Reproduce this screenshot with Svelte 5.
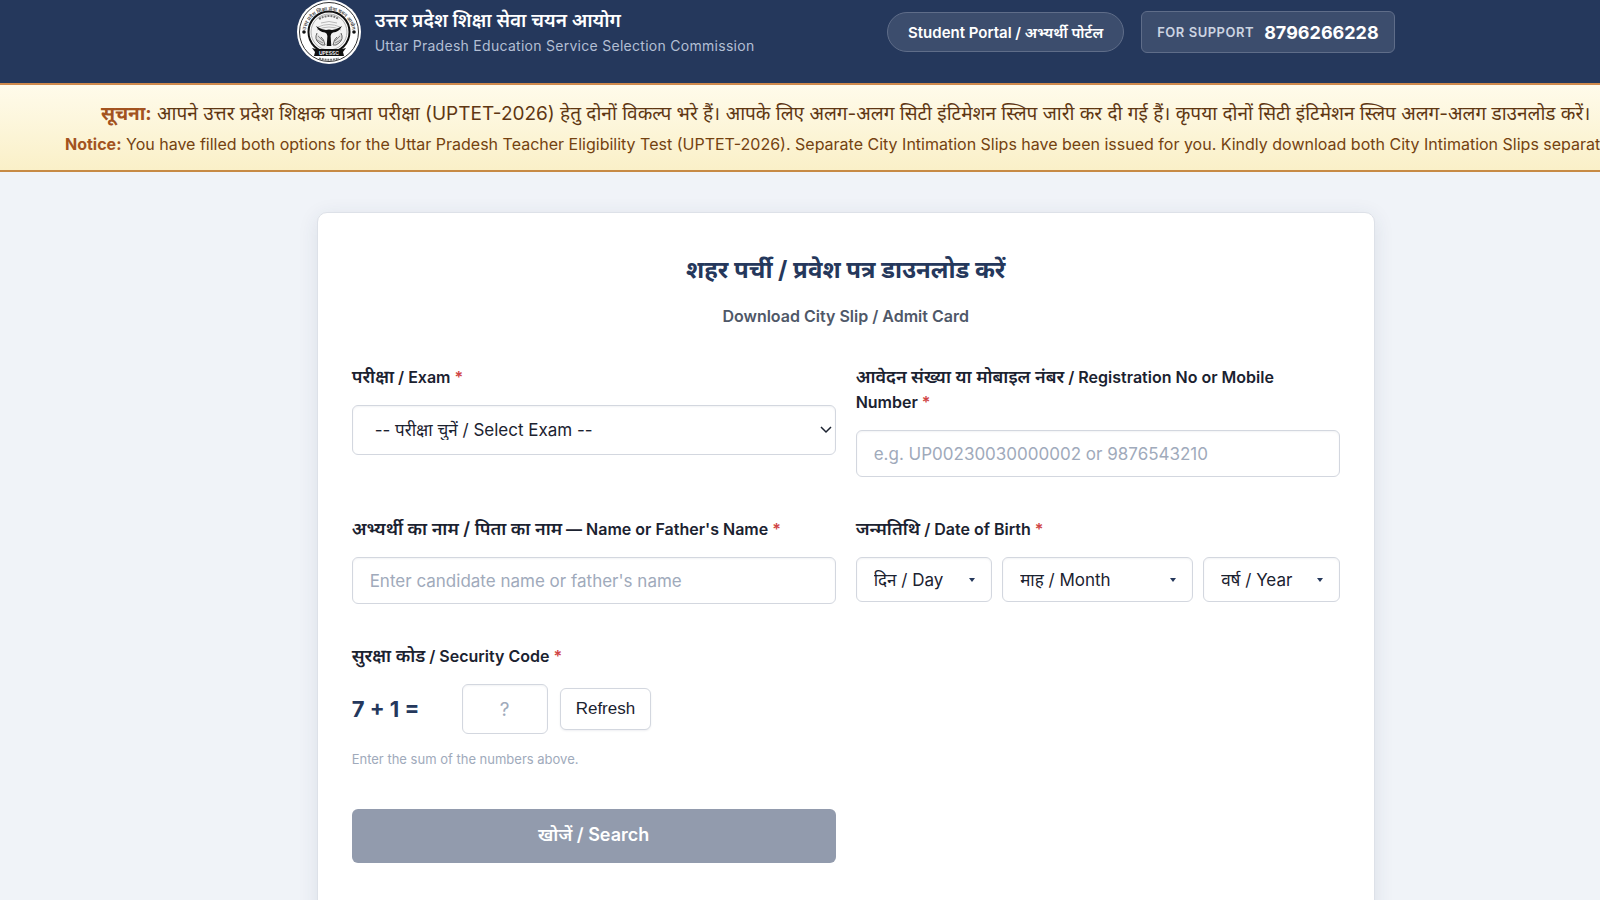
<script lang="ts">
  let exam = $state('')
  let registration = $state('')
  let candidate = $state('')
  let day = $state('')
  let month = $state('')
  let year = $state('')
  let answer = $state('')
  let first = $state(7)
  let second = $state(1)

  const days = Array.from({ length: 31 }, (_, i) => String(i + 1))
  const months = Array.from({ length: 12 }, (_, i) => String(i + 1))
  const years = Array.from({ length: 60 }, (_, i) => String(2010 - i))

  let ready = $derived(
    Boolean(exam && registration && candidate && day && month && year) &&
      Number(answer) === first + second
  )

  function refresh(): void {
    first = Math.ceil(Math.random() * 9)
    second = Math.ceil(Math.random() * 9)
    answer = ''
  }
</script>

<div class="page">
  <header>
    <div class="header-inner">
      <div class="brand">
        <svg class="logo" viewBox="0 0 64 64" aria-hidden="true">
          <defs>
            <path id="arc-top" d="M8.500 34a23.500 23.500 0 0 1 47 0" />
          </defs>
          <circle cx="32" cy="32" r="32" fill="#fff" />
          <circle cx="32" cy="32" r="29.500" fill="none" stroke="#333" stroke-width="1" />
          <circle cx="32" cy="32" r="20.500" fill="none" stroke="#111" stroke-width="2" />
          <circle cx="32" cy="32" r="18" fill="#f4f4f4" stroke="#999" stroke-width="0.800" />
          <text class="seal" font-size="5"><textPath href="#arc-top" startOffset="50%">उत्तर प्रदेश शिक्षा सेवा चयन आयोग</textPath></text>
          <circle cx="7" cy="32" r="1.800" fill="#111" />
          <circle cx="57" cy="32" r="1.800" fill="#111" />
          <path d="M22 19Q32 13 42 19" fill="none" stroke="#777" stroke-width="2" stroke-dasharray="2 1" />
          <path d="M21 27q11-5 22 0M20 30q12-6 24 0M24 23q8-3 16 0" fill="none" stroke="#aaa" stroke-width="0.800" />
          <path d="M19 26q5 3.500 10 4q3-1 6 0q5-.5 10-4q-3 6-9 6.600q-2.200.6-2.400 3.400l.7 10h-4.600l.7-10q-.2-2.800-2.400-3.400q-6-.6-9-6.600z" fill="#111" />
          <path d="M20 33q-3 6 2 10q3 3 6 2q-1-6-4-8m20-4q3 6-2 10q-3 3-6 2q1-6 4-8" fill="#ddd" stroke="#666" stroke-width="1" />
          <path d="M21 36l5 5m-6-1l6 3m17-7l-5 5m6-1l-6 3" stroke="#777" stroke-width="0.800" />
          <path d="M15 48l4 1h26l4-1-3 4 1 4H17l1-4z" fill="#111" />
          <text class="seal band" x="32" y="54.500" font-size="5">UPESSC</text>
          <path d="M22 58.500Q32 61 42 58.500" fill="none" stroke="#777" stroke-width="2" stroke-dasharray="2 0.800" />
        </svg>
        <div class="brand-text">
          <strong>उत्तर प्रदेश शिक्षा सेवा चयन आयोग</strong>
          <span>Uttar Pradesh Education Service Selection Commission</span>
        </div>
      </div>
      <div class="header-actions">
        <a class="portal" href="#portal">Student Portal / अभ्यर्थी पोर्टल</a>
        <a class="support" href="tel:8796266228">
          <span>FOR SUPPORT</span>
          <strong>8796266228</strong>
        </a>
      </div>
    </div>
  </header>

  <section class="notice">
    <p class="hindi"><b>सूचना:</b> आपने उत्तर प्रदेश शिक्षक पात्रता परीक्षा (UPTET-2026) हेतु दोनों विकल्प भरे हैं। आपके लिए अलग-अलग सिटी इंटिमेशन स्लिप जारी कर दी गई हैं। कृपया दोनों सिटी इंटिमेशन स्लिप अलग-अलग डाउनलोड करें।</p>
    <p><b>Notice:</b> You have filled both options for the Uttar Pradesh Teacher Eligibility Test (UPTET-2026). Separate City Intimation Slips have been issued for you. Kindly download both City Intimation Slips separately.</p>
  </section>

  <main>
    <h1>शहर पर्ची / प्रवेश पत्र डाउनलोड करें</h1>
    <p class="subtitle">Download City Slip / Admit Card</p>

    <form onsubmit={(e) => e.preventDefault()}>
      <div class="field">
        <label for="exam"><span lang="hi">परीक्षा</span> / Exam <i>*</i></label>
        <div class="select-wrap">
          <select id="exam" class="exam" bind:value={exam}>
            <option value="">-- परीक्षा चुनें / Select Exam --</option>
            <option value="uptet">UPTET-2026</option>
          </select>
          <svg class="chevron" viewBox="0 0 12 8" aria-hidden="true"><path d="M1 1l5 5 5-5" /></svg>
        </div>
      </div>

      <div class="field">
        <label for="registration"><span lang="hi">आवेदन संख्या या मोबाइल नंबर</span> / Registration No or Mobile Number <i>*</i></label>
        <input id="registration" placeholder="e.g. UP00230030000002 or 9876543210" bind:value={registration} />
      </div>

      <div class="field">
        <label for="candidate"><span lang="hi">अभ्यर्थी का नाम / पिता का नाम</span> — Name or Father's Name <i>*</i></label>
        <input id="candidate" placeholder="Enter candidate name or father's name" bind:value={candidate} />
      </div>

      <div class="field">
        <label for="day"><span lang="hi">जन्मतिथि</span> / Date of Birth <i>*</i></label>
        <div class="dob">
          <div class="select-wrap">
            <select id="day" bind:value={day}>
              <option value="">दिन / Day</option>
              {#each days as d}<option>{d}</option>{/each}
            </select>
            <svg class="caret" viewBox="0 0 6 4" aria-hidden="true"><path d="M0 0h6L3 4z" /></svg>
          </div>
          <div class="select-wrap">
            <select aria-label="माह / Month" bind:value={month}>
              <option value="">माह / Month</option>
              {#each months as m}<option>{m}</option>{/each}
            </select>
            <svg class="caret" viewBox="0 0 6 4" aria-hidden="true"><path d="M0 0h6L3 4z" /></svg>
          </div>
          <div class="select-wrap">
            <select aria-label="वर्ष / Year" bind:value={year}>
              <option value="">वर्ष / Year</option>
              {#each years as y}<option>{y}</option>{/each}
            </select>
            <svg class="caret" viewBox="0 0 6 4" aria-hidden="true"><path d="M0 0h6L3 4z" /></svg>
          </div>
        </div>
      </div>

      <div class="field first-column">
        <label for="answer"><span lang="hi">सुरक्षा कोड</span> / Security Code <i>*</i></label>
        <div class="captcha">
          <span class="sum">{first} + {second} =</span>
          <input id="answer" inputmode="numeric" placeholder="?" bind:value={answer} />
          <button type="button" class="refresh" onclick={refresh}>Refresh</button>
        </div>
        <p class="hint">Enter the sum of the numbers above.</p>
      </div>

      <button class="search first-column" disabled={!ready}>खोजें / Search</button>
    </form>
  </main>
</div>

<style>
  :global(body) {
    background: #f0f3f8;
    overflow-x: hidden;
  }

  .page {
    /* the one-line notice sets the page width on narrower windows */
    width: max-content;
    min-width: 100%;
    color: #1b2230;
    font-family: Inter, 'Noto Sans Devanagari', 'Noto Sans', sans-serif;
    font-size: 16px;
    line-height: 25px;
  }

  header {
    background: #25385c;
    padding-bottom: 19px;
  }

  .header-inner {
    display: flex;
    align-items: center;
    justify-content: space-between;
    max-width: 1098px;
    margin: 0 auto;
  }

  .brand {
    display: flex;
    align-items: center;
    gap: 14px;
  }

  .logo {
    width: 64px;
    height: 64px;
  }

  .seal {
    font-weight: 600;
    fill: #444;
    text-anchor: middle;
  }

  .band {
    fill: #fff;
  }

  .brand-text {
    display: flex;
    flex-direction: column;
    padding-top: 2px;
  }

  .brand-text strong {
    color: #fff;
    font-size: 19px;
    font-weight: 600;
  }

  .brand-text span {
    color: #b3bfd4;
    font-size: 14px;
    letter-spacing: 0.02em;
  }

  .header-actions {
    display: flex;
    align-items: center;
    gap: 17px;
  }

  .header-actions a {
    color: #fff;
    text-decoration: none;
    background: #3c4d6d;
    border: 1px solid #5f6d89;
    box-sizing: border-box;
  }

  .portal {
    display: flex;
    align-items: center;
    height: 40px;
    padding: 0 20px;
    border-radius: 20px;
    font-size: 15px;
    font-weight: 600;
  }

  .support {
    display: flex;
    align-items: center;
    gap: 10px;
    height: 42px;
    padding: 0 15px;
    border-radius: 6px;
  }

  .support span {
    color: #ccd4e2;
    font-size: 13px;
    font-weight: 600;
    letter-spacing: 0.04em;
  }

  .support strong {
    font-size: 18px;
    font-weight: 700;
  }

  .notice {
    padding: 15px 65px 13px;
    border-top: 2px solid #d08a4c;
    border-bottom: 2px solid #c78a45;
    background: linear-gradient(#fffbeb, #faf0c8);
    color: #744210;
    text-align: center;
    white-space: nowrap;
  }

  .notice p {
    margin: 0;
  }

  .notice .hindi {
    margin-bottom: 4px;
    color: #5f3713;
    font-size: 19px;
    line-height: 28px;
  }

  .notice b {
    color: #a3531f;
    font-weight: 700;
  }

  main {
    max-width: 1058px;
    box-sizing: border-box;
    margin: 40px auto;
    padding: 40px 34px 60px;
    border: 1px solid #dde1e8;
    border-radius: 10px;
    background: #fff;
    box-shadow: 0 4px 20px rgba(37, 56, 92, 0.1);
  }

  h1 {
    margin: 0 0 17px;
    color: #25385c;
    font-size: 24px;
    font-weight: 700;
    line-height: 34px;
    text-align: center;
  }

  .subtitle {
    margin: 0 0 36px;
    color: #4f5868;
    font-weight: 600;
    text-align: center;
  }

  form {
    display: grid;
    grid-template-columns: 1fr 1fr;
    align-items: start;
    gap: 40px 20px;
  }

  .field {
    display: flex;
    flex-direction: column;
    gap: 15px;
  }

  .first-column {
    grid-column: 1;
  }

  label {
    font-weight: 600;
  }

  label [lang='hi'] {
    font-size: 18px;
    line-height: 20px;
  }

  label i {
    color: #d04545;
    font-style: normal;
  }

  input,
  select {
    width: 100%;
    height: 47px;
    box-sizing: border-box;
    padding: 0 17px;
    border: 1px solid #d3d7df;
    border-radius: 6px;
    background: #fff;
    color: #1b2230;
    font-family: inherit;
    font-size: 17px;
    box-shadow: inset 0 1px 2px rgba(37, 56, 92, 0.06);
  }

  input::placeholder {
    color: #a0aabb;
    opacity: 1;
  }

  .select-wrap {
    position: relative;
  }

  select {
    display: block;
    height: 45px;
    appearance: none;
  }

  .exam {
    height: 50px;
    padding: 0 22px;
  }

  .chevron {
    position: absolute;
    top: 21px;
    right: 4px;
    width: 12px;
    height: 8px;
    fill: none;
    stroke: #1b2230;
    stroke-width: 1.500;
    pointer-events: none;
  }

  .caret {
    position: absolute;
    top: 21px;
    right: 17px;
    width: 6px;
    height: 4px;
    fill: #25385c;
    pointer-events: none;
  }

  .dob {
    display: grid;
    grid-template-columns: 5fr 7fr 5fr;
    gap: 10px;
  }

  .captcha {
    display: flex;
    align-items: center;
    gap: 12px;
  }

  .sum {
    min-width: 98px;
    color: #25385c;
    font-size: 22px;
    font-weight: 700;
  }

  .captcha input {
    width: 86px;
    height: 50px;
    font-size: 19px;
    text-align: center;
  }

  button {
    font-family: inherit;
    cursor: pointer;
  }

  .refresh {
    height: 42px;
    padding: 0 15px;
    border: 1px solid #d3d7df;
    border-radius: 6px;
    background: #fff;
    color: #1b2230;
    font-family: 'Liberation Sans', Arial, sans-serif;
    font-size: 17px;
    box-shadow: 0 1px 2px rgba(37, 56, 92, 0.08);
  }

  .hint {
    margin: 0;
    color: #a0aabb;
    font-size: 13px;
    line-height: 20px;
  }

  .search {
    height: 54px;
    border: 0;
    border-radius: 6px;
    background: #25385c;
    color: #fff;
    font-size: 18px;
    font-weight: 600;
  }

  .search:disabled {
    background: #929bad;
    cursor: default;
  }
</style>
